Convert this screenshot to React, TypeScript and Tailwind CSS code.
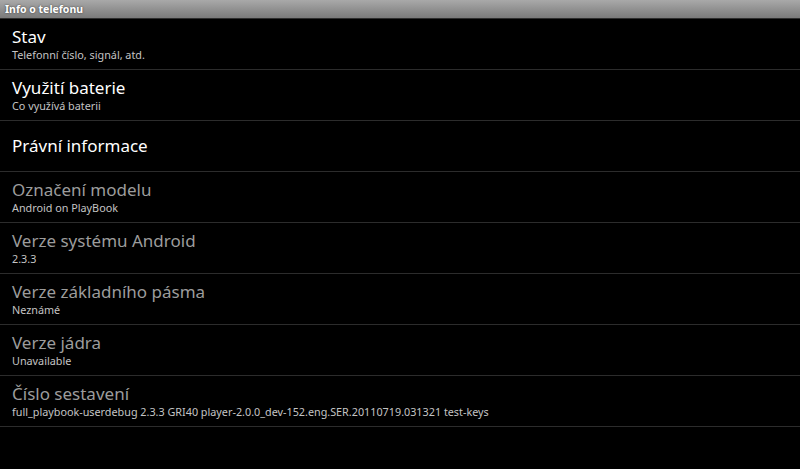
const items: { title: string; summary?: string; enabled: boolean }[] = [
  { title: "Stav", summary: "Telefonní číslo, signál, atd.", enabled: true },
  { title: "Využití baterie", summary: "Co využívá baterii", enabled: true },
  { title: "Právní informace", enabled: true },
  { title: "Označení modelu", summary: "Android on PlayBook", enabled: false },
  { title: "Verze systému Android", summary: "2.3.3", enabled: false },
  { title: "Verze základního pásma", summary: "Neznámé", enabled: false },
  { title: "Verze jádra", summary: "Unavailable", enabled: false },
  {
    title: "Číslo sestavení",
    summary: "full_playbook-userdebug 2.3.3 GRI40 player-2.0.0_dev-152.eng.SER.20110719.031321 test-keys",
    enabled: false,
  },
];

export default function App() {
  return (
    <div className="h-[469px] w-[800px] overflow-hidden bg-black font-['Noto_Sans',sans-serif]">
      <div className="flex h-[19px] items-center border-b border-[#2e2e2e] bg-gradient-to-b from-[#a9a9a9] to-[#7b7b7b] px-[5px]">
        <span className="text-[10.5px] font-bold leading-none text-white [text-shadow:0_0_2px_#333]">Info o telefonu</span>
      </div>
      <ul>
        {items.map((it) => (
          <li
            key={it.title}
            className="flex h-[51px] flex-col justify-center border-b border-[#2c2c2c] px-3"
          >
            <div
              className={
                "text-[17px] leading-[22px] " + (it.enabled ? "text-white" : "text-[#9c9c9c]")
              }
            >
              {it.title}
            </div>
            {it.summary && (
              <div className="text-[10.8px] leading-[14px] text-[#c4c4c4]">{it.summary}</div>
            )}
          </li>
        ))}
      </ul>
    </div>
  );
}
